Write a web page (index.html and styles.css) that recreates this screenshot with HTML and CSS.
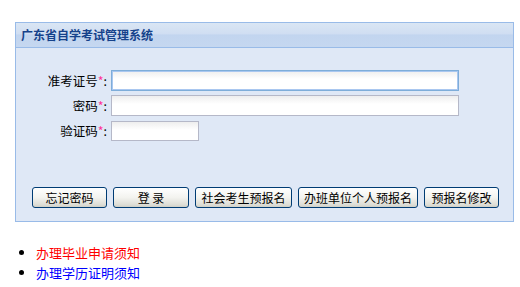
FILE: index.html
```html
<html>
  <head>
    <meta charset="utf-8">
    <link rel="stylesheet" href="styles.css">
  </head>
  <body>
    <div class="panel">
      <div class="panel-head">广东省自学考试管理系统</div>
      <div class="panel-body">
        <div class="row">
          <label class="lbl">准考证号<span class="req">*</span>:</label>
          <input type="text" class="txt wide focus">
        </div>
        <div class="row">
          <label class="lbl">密码<span class="req">*</span>:</label>
          <input type="password" class="txt wide">
        </div>
        <div class="row">
          <label class="lbl">验证码<span class="req">*</span>:</label>
          <input type="text" class="txt short">
        </div>
        <div class="buttons">
          <button class="btn b1">忘记密码</button>
          <button class="btn b2">登 录</button>
          <button class="btn b3">社会考生预报名</button>
          <button class="btn b4">办班单位个人预报名</button>
          <button class="btn b5">预报名修改</button>
        </div>
      </div>
    </div>
    <ul class="links">
      <li><a class="red">办理毕业申请须知</a></li>
      <li><a class="blue">办理学历证明须知</a></li>
    </ul>
  </body>
</html>
```

FILE: styles.css
```css
body { margin:0; padding:22px 0 0 15px; font-family:"Noto Sans CJK SC", "DejaVu Sans", sans-serif; font-size:12px; color:#000; }
.panel { width:497px; border:1px solid #99bbe8; background:#dfe8f6; }
.panel-head { height:24px; line-height:24px; padding-left:5px; font-weight:bold; font-size:12px; color:#15428b; border-bottom:1px solid #99bbe8; background:linear-gradient(#dae6f4 0, #d0def2 45%, #c2d5ef 50%, #c5d7f0 100%); }
.panel-body { padding:20px 0 13px 0; }
.row { display:flex; align-items:center; height:25px; }
.lbl { width:91px; text-align:right; padding-right:4px; line-height:20px; font-size:12.5px; }
.req { color:#ff3399; }
.txt { height:21px; box-sizing:border-box; border:1px solid #b5b8c8; background:linear-gradient(#eeeeee 0, #ffffff 8px); padding:0 3px; margin:0; font-size:12px; outline:none; }
.txt.focus { border-color:#7eadd9; box-shadow:0 0 0 1px #a9c7f0 inset; }
.wide { width:348px; }
.short { width:88px; height:20px; }
.buttons { display:flex; margin-top:44px; padding-left:16px; }
.btn { height:21px; padding:0; margin:0 6px 0 0; font-family:inherit; font-size:12px; color:#000; border:1px solid #003c74; border-radius:3px; background:linear-gradient(#ffffff 0, #f3f3ef 50%, #dcdcd4 90%, #cfcfc6 100%); line-height:18px; }
.b1 { width:75px; }
.b2 { width:76px; }
.b3 { width:97px; }
.b4 { width:120px; }
.b5 { width:75px; }
.links { margin:21px 0 0 -15px; padding:0 0 0 36px; font-size:13px; }
.links li { line-height:20px; }
.red { color:#ff0000; }
.blue { color:#0000ff; }
```
